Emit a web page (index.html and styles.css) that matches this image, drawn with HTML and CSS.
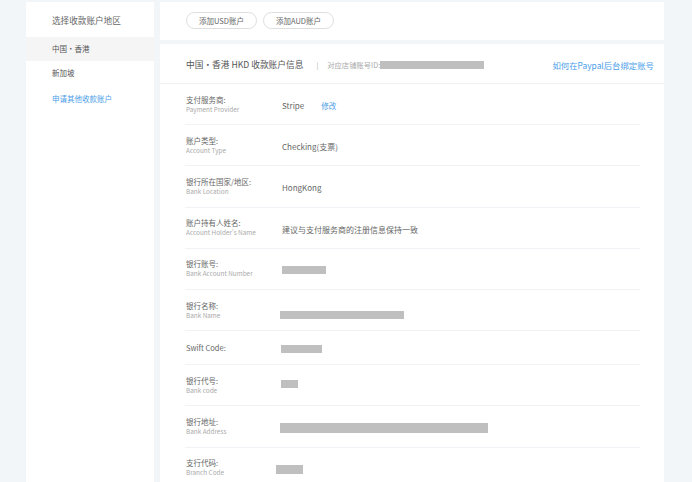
FILE: index.html
```html
<!DOCTYPE html>
<html lang="zh-CN">
<head>
<meta charset="utf-8">
<title>收款账户</title>
<link rel="stylesheet" href="styles.css">
</head>
<body>
<div class="page">
  <aside class="sidebar">
    <div class="side-title">选择收款账户地区</div>
    <div class="region active">中国・香港</div>
    <div class="region">新加坡</div>
    <a class="side-link" href="#">申请其他收款账户</a>
  </aside>
  <main class="main">
    <div class="card top-card">
      <button class="pill">添加USD账户</button>
      <button class="pill">添加AUD账户</button>
    </div>
    <div class="card info-card">
      <div class="info-head">
        <span class="info-title">中国・香港 HKD 收款账户信息</span>
        <span class="sep">|</span>
        <span class="shop-id">对应店铺账号ID:</span><span class="mask" style="width:104px;height:8px"></span>
        <a class="help-link" href="#">如何在Paypal后台绑定账号</a>
      </div>
      <div class="rows">
        <div class="row">
          <div class="label"><div class="cn">支付服务商:</div><div class="en">Payment Provider</div></div>
          <div class="value">Stripe<a class="edit" href="#">修改</a></div>
        </div>
        <div class="row">
          <div class="label"><div class="cn">账户类型:</div><div class="en">Account Type</div></div>
          <div class="value">Checking(支票)</div>
        </div>
        <div class="row">
          <div class="label"><div class="cn">银行所在国家/地区:</div><div class="en">Bank Location</div></div>
          <div class="value">HongKong</div>
        </div>
        <div class="row">
          <div class="label"><div class="cn">账户持有人姓名:</div><div class="en">Account Holder's Name</div></div>
          <div class="value">建议与支付服务商的注册信息保持一致</div>
        </div>
        <div class="row">
          <div class="label"><div class="cn">银行账号:</div><div class="en">Bank Account Number</div></div>
          <div class="value"><span class="mask" style="width:44px;height:8px"></span></div>
        </div>
        <div class="row">
          <div class="label"><div class="cn">银行名称:</div><div class="en">Bank Name</div></div>
          <div class="value shift2"><span class="mask" style="width:124px;height:8px;margin-top:6px"></span></div>
        </div>
        <div class="row short">
          <div class="label"><div class="cn">Swift Code:</div></div>
          <div class="value shift1"><span class="mask" style="width:41px;height:8px"></span></div>
        </div>
        <div class="row">
          <div class="label"><div class="cn">银行代号:</div><div class="en">Bank code</div></div>
          <div class="value shift1"><span class="mask" style="width:17px;height:8px;margin-bottom:6px"></span></div>
        </div>
        <div class="row">
          <div class="label"><div class="cn">银行地址:</div><div class="en">Bank Address</div></div>
          <div class="value shift2"><span class="mask" style="width:208px;height:10px"></span></div>
        </div>
        <div class="row">
          <div class="label"><div class="cn">支行代码:</div><div class="en">Branch Code</div></div>
          <div class="value shift6"><span class="mask" style="width:27px;height:9px"></span></div>
        </div>
      </div>
    </div>
  </main>
</div>
</body>
</html>
```

FILE: styles.css
```css
* { box-sizing: border-box; }
html, body {
  margin: 0;
  padding: 0;
  background: #f3f6f9;
  font-family: "Noto Sans CJK SC", "Noto Sans", sans-serif;
  color: #555;
}
.page {
  display: flex;
  align-items: flex-start;
  gap: 6px;
  padding: 2px 28px 0 26px;
  height: 482px;
  overflow: hidden;
}
.sidebar {
  width: 128px;
  height: 480px;
  flex: none;
  background: #fff;
  display: flex;
  flex-direction: column;
}
.side-title {
  height: 35px;
  display: flex;
  align-items: center;
  padding-left: 26px;
  font-size: 8.6px;
  color: #666;
}
.region {
  height: 23.5px;
  display: flex;
  align-items: center;
  padding-left: 26px;
  font-size: 7.5px;
  color: #555;
}
.region.active { background: #f5f5f5; }
.side-link {
  margin-top: 5px;
  padding-left: 26px;
  font-size: 7.5px;
  color: #4a9de8;
  text-decoration: none;
  line-height: 20px;
}
.main {
  flex: 1;
  display: flex;
  flex-direction: column;
  gap: 4px;
  min-width: 0;
}
.card { background: #fff; flex: none; }
.top-card {
  height: 38px;
  display: flex;
  align-items: flex-start;
  gap: 6px;
  padding: 10px 0 0 26px;
}
.pill {
  height: 17px;
  width: 71px;
  border: 1px solid #dedede;
  border-radius: 9px;
  background: #fff;
  font-family: inherit;
  font-size: 7.5px;
  color: #666;
  padding: 0;
  line-height: 15px;
}
.info-head {
  height: 40px;
  display: flex;
  align-items: center;
  padding: 2px 10px 0 26px;
  border-bottom: 1px solid #f1f1f1;
}
.info-title {
  font-size: 8.7px;
  color: #555;
}
.sep {
  margin: 0 9px 0 13px;
  font-size: 7px;
  color: #aaa;
}
.shop-id {
  font-size: 7.3px;
  color: #aaa;
}
.mask {
  display: inline-block;
  background: #bfbfbf;
  flex: none;
}
.help-link {
  margin-left: auto;
  font-size: 8.4px;
  color: #4a9de8;
  text-decoration: none;
}
.rows {
  padding: 0 24px 0 25px;
}
.row {
  height: 41.2px;
  display: flex;
  align-items: center;
  border-bottom: 1px solid #f0f2f5;
}
.row.short { height: 34px; }
.label {
  width: 97px;
  flex: none;
  padding-left: 1px;
}
.cn {
  font-size: 7.5px;
  color: #666;
  line-height: 10px;
}
.en {
  font-size: 6.4px;
  color: #aaa;
  line-height: 9px;
}
.value {
  display: flex;
  align-items: center;
  font-size: 8px;
  color: #666;
  margin-top: 3px;
}
.value.shift1 { margin-left: -1px; }
.value.shift2 { margin-left: -2px; }
.value.shift6 { margin-left: -6px; }
.edit {
  margin-left: 17px;
  font-size: 7.5px;
  color: #4a9de8;
  text-decoration: none;
}
```
